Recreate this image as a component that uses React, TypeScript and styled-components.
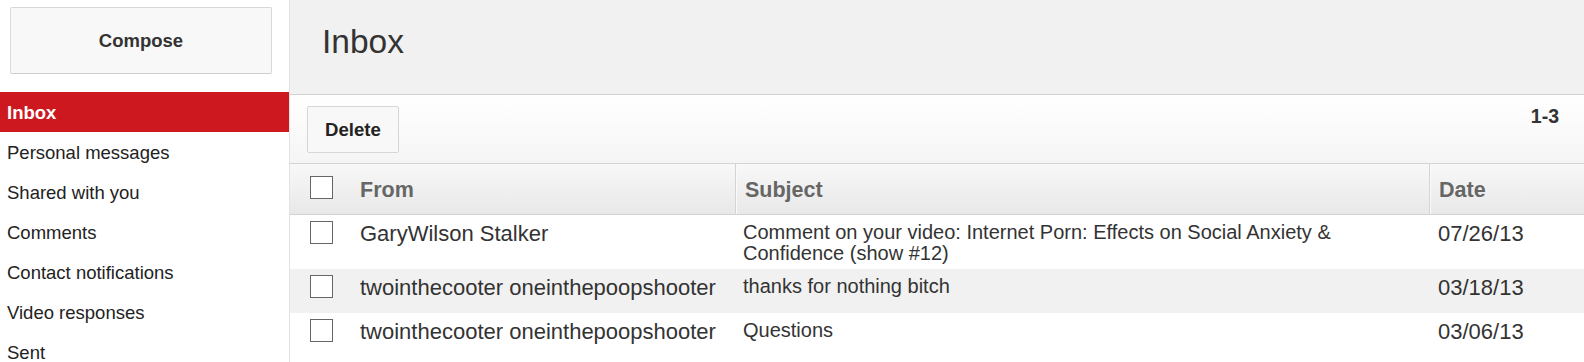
import React, { useState } from "react";
import styled, { createGlobalStyle } from "styled-components";

const GlobalStyle = createGlobalStyle`
  html, body {
    margin: 0;
    padding: 0;
    background: #fff;
    font-family: "Liberation Sans", Arial, sans-serif;
    color: #333;
  }
`;

const navItems = [
  "Inbox",
  "Personal messages",
  "Shared with you",
  "Comments",
  "Contact notifications",
  "Video responses",
  "Sent",
];

const messages = [
  {
    from: "GaryWilson Stalker",
    subject:
      "Comment on your video: Internet Porn: Effects on Social Anxiety & Confidence (show #12)",
    date: "07/26/13",
  },
  {
    from: "twointhecooter oneinthepoopshooter",
    subject: "thanks for nothing bitch",
    date: "03/18/13",
  },
  {
    from: "twointhecooter oneinthepoopshooter",
    subject: "Questions",
    date: "03/06/13",
  },
];

function App() {
  const [checked, setchecked] = useState<boolean[]>([false, false, false]);
  const allChecked = checked.every((c) => c);

  const toggle = (i: number) => {
    setchecked(checked.map((c, j) => (j === i ? !c : c)));
  };

  return (
    <Page>
      <GlobalStyle />
      <Sidebar>
        <Compose>Compose</Compose>
        <Nav>
          {navItems.map((item) => (
            <NavItem key={item} active={item === "Inbox"}>
              {item}
            </NavItem>
          ))}
        </Nav>
      </Sidebar>
      <Main>
        <Header>
          <Title>Inbox</Title>
        </Header>
        <Toolbar>
          <Button>Delete</Button>
          <Count>1-3</Count>
        </Toolbar>
        <Table>
          <HeadRow>
            <CheckCell head>
              <Check
                type="checkbox"
                checked={allChecked}
                onChange={() => setchecked(checked.map(() => !allChecked))}
              />
            </CheckCell>
            <HeadCell>From</HeadCell>
            <HeadCell divider>Subject</HeadCell>
            <HeadCell divider>Date</HeadCell>
          </HeadRow>
          {messages.map((m, i) => (
            <Row key={i} shaded={i % 2 === 1}>
              <CheckCell>
                <Check
                  type="checkbox"
                  checked={checked[i]}
                  onChange={() => toggle(i)}
                />
              </CheckCell>
              <FromCell>{m.from}</FromCell>
              <SubjectCell>{m.subject}</SubjectCell>
              <DateCell>{m.date}</DateCell>
            </Row>
          ))}
        </Table>
      </Main>
    </Page>
  );
}

export default App;

const Page = styled.div`
  display: flex;
  width: 1584px;
  height: 362px;
  overflow: hidden;
`;

const Sidebar = styled.div`
  width: 289px;
  flex-shrink: 0;
  border-right: 1px solid #e3e3e3;
  padding-top: 7px;
  box-sizing: content-box;
`;

const Compose = styled.div`
  margin: 0 17px 18px 10px;
  height: 65px;
  border: 1px solid #d8d8d8;
  border-bottom-color: #cfcfcf;
  border-radius: 2px;
  background: #f8f8f8;
  display: flex;
  align-items: center;
  justify-content: center;
  font-size: 18.5px;
  font-weight: bold;
  color: #333;
  cursor: pointer;
`;

const Nav = styled.div`
  display: flex;
  flex-direction: column;
`;

const NavItem = styled.div<{ active?: boolean }>`
  height: 40px;
  line-height: 41px;
  padding-left: 7px;
  font-size: 18.5px;
  white-space: nowrap;
  color: ${(p) => (p.active ? "#fff" : "#222")};
  background: ${(p) => (p.active ? "#cc181e" : "transparent")};
  font-weight: ${(p) => (p.active ? "bold" : "normal")};
  cursor: pointer;
`;

const Main = styled.div`
  flex: 1;
  display: flex;
  flex-direction: column;
  min-width: 0;
`;

const Header = styled.div`
  height: 95px;
  background: #f1f1f1;
  border-bottom: 1px solid #d3d3d3;
  padding: 22px 0 0 32px;
  box-sizing: border-box;
`;

const Title = styled.h1`
  margin: 0;
  font-size: 33.5px;
  line-height: 40px;
  font-weight: normal;
  color: #333;
`;

const Toolbar = styled.div`
  height: 69px;
  box-sizing: border-box;
  display: flex;
  justify-content: space-between;
  align-items: flex-start;
  padding: 0 25px 0 17px;
  background: linear-gradient(#fff, #f5f5f5);
  border-bottom: 1px solid #d3d3d3;
`;

const Button = styled.div`
  margin-top: 11px;
  width: 92px;
  height: 47px;
  box-sizing: border-box;
  border: 1px solid #d6d6d6;
  border-radius: 2px;
  background: #f8f8f8;
  display: flex;
  align-items: center;
  justify-content: center;
  font-size: 18.6px;
  font-weight: bold;
  color: #222;
  cursor: pointer;
`;

const Count = styled.div`
  padding-top: 9px;
  font-size: 19.5px;
  line-height: 24px;
  font-weight: bold;
  color: #333;
`;

const Table = styled.div`
  display: flex;
  flex-direction: column;
`;

const cols = "60px 385px 694px 1fr";

const HeadRow = styled.div`
  display: grid;
  grid-template-columns: ${cols};
  height: 51px;
  box-sizing: border-box;
  background: linear-gradient(#f8f8f8, #e8e8e8);
  border-bottom: 1px solid #d3d3d3;
`;

const HeadCell = styled.div<{ divider?: boolean }>`
  display: flex;
  align-items: center;
  padding-left: ${(p) => (p.divider ? "9px" : "10px")};
  padding-top: 2px;
  font-size: 21.5px;
  font-weight: bold;
  color: #666;
  border-left: ${(p) => (p.divider ? "1px solid #d4d4d4" : "none")};
  box-shadow: ${(p) => (p.divider ? "inset 1px 0 0 #fafafa" : "none")};
`;

const CheckCell = styled.div<{ head?: boolean }>`
  display: flex;
  justify-content: flex-start;
  align-items: ${(p) => (p.head ? "center" : "flex-start")};
  padding-left: 20px;
  padding-top: ${(p) => (p.head ? "0" : "6px")};
  padding-bottom: ${(p) => (p.head ? "3px" : "0")};
  margin-top: ${(p) => (p.head ? "0" : "-7px")};
`;

const Check = styled.input`
  appearance: none;
  -webkit-appearance: none;
  margin: 0;
  width: 23px;
  height: 23px;
  border: 1px solid #666;
  background: #fff;
  cursor: pointer;
  &:checked {
    background: #4a90d9;
  }
`;

const Row = styled.div<{ shaded?: boolean }>`
  display: grid;
  grid-template-columns: ${cols};
  min-height: 44px;
  box-sizing: border-box;
  padding: 7px 0 5px;
  background: ${(p) => (p.shaded ? "#f1f1f1" : "#fff")};
`;

const FromCell = styled.div`
  padding-left: 10px;
  font-size: 22px;
  line-height: 24px;
  color: #333;
  white-space: nowrap;
`;

const SubjectCell = styled.div`
  padding: 0 6px 0 7px;
  margin-left: 1px;
  font-size: 20px;
  line-height: 21px;
  color: #333;
`;

const DateCell = styled.div`
  padding-left: 8px;
  margin-left: 1px;
  font-size: 22px;
  line-height: 24px;
  color: #333;
`;
